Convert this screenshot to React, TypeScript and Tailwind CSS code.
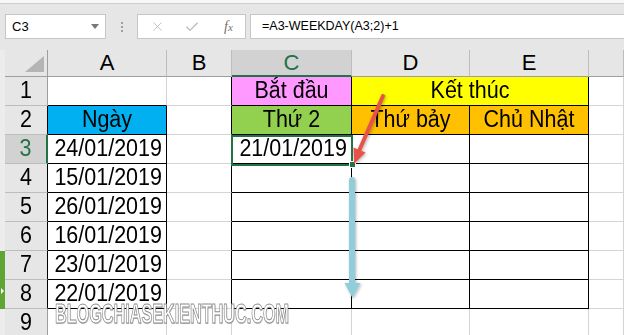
import { X, Check } from 'lucide-react';

interface CellInfo {
  text?: string;
  bg?: string;
  align?: 'left' | 'center' | 'right';
  span?: number;
  rb?: boolean;
  bb?: boolean;
}

const cols = ['A', 'B', 'C', 'D', 'E', ''];

// black-bordered block: A2:A8 and C1:E8 (col index 0 = A)
const inBlock = (r: number, c: number) =>
  (c === 0 && r >= 2 && r <= 8) || (c >= 2 && c <= 4 && r >= 1 && r <= 8);

const dates = ['24/01/2019', '15/01/2019', '26/01/2019', '16/01/2019', '23/01/2019', '22/01/2019'];

function buildRow(r: number): CellInfo[] {
  const cells: CellInfo[] = [];
  for (let c = 0; c < 6; c++) {
    const rb = inBlock(r, c) || inBlock(r, c + 1);
    const bb = inBlock(r, c) || inBlock(r + 1, c);
    const cell: CellInfo = { rb, bb };
    if (c === 0 && r === 2) Object.assign(cell, { text: 'Ngày', bg: 'bg-[#00b0f0]', align: 'center' });
    if (c === 0 && r >= 3 && r <= 8) Object.assign(cell, { text: dates[r - 3], align: 'right' });
    if (c === 2 && r === 1) Object.assign(cell, { text: 'Bắt đầu', bg: 'bg-[#ff99ff]', align: 'center' });
    if (c === 2 && r === 2) Object.assign(cell, { text: 'Thứ 2', bg: 'bg-[#92d050]', align: 'center' });
    if (c === 2 && r === 3) Object.assign(cell, { text: '21/01/2019', align: 'right' });
    if (c === 3 && r === 1) Object.assign(cell, { text: 'Kết thúc', bg: 'bg-[#ffff00]', align: 'center', span: 2, rb: true });
    if (c === 3 && r === 2) Object.assign(cell, { text: 'Thứ bảy', bg: 'bg-[#ffc000]', align: 'center' });
    if (c === 4 && r === 2) Object.assign(cell, { text: 'Chủ Nhật', bg: 'bg-[#ffc000]', align: 'center' });
    if (c === 4 && r === 1) continue;
    cells.push(cell);
  }
  return cells;
}

function Cell({ cell }: { cell: CellInfo }) {
  const justify =
    cell.align === 'right' ? 'justify-end pr-[4px]' : cell.align === 'center' ? 'justify-center' : 'justify-start';
  return (
    <div
      className={`flex items-center text-[21.5px] leading-[0.7] text-black border-r border-b ${justify} ${
        cell.bg ?? 'bg-white'
      } ${cell.rb ? 'border-r-black' : 'border-r-[#d4d4d4]'} ${cell.bb ? 'border-b-black' : 'border-b-[#d4d4d4]'} ${
        cell.span === 2 ? 'col-span-2' : ''
      }`}
    >
      {cell.text && <span className="inline-block scale-y-[1.1]">{cell.text}</span>}
    </div>
  );
}

function RowHeader({ r }: { r: number }) {
  const selected = r === 3;
  const green = r === 7 || r === 8;
  return (
    <div className="flex">
      <div className={`w-[5px] relative ${green ? 'bg-[#5ea531]' : 'bg-[#ececec]'}`}>
        {r === 8 && (
          <div className="absolute left-[1px] top-[8px] w-0 h-0 border-y-[3px] border-y-transparent border-l-[3px] border-l-white" />
        )}
      </div>
      <div
        className={`flex-1 flex items-center justify-center text-[21.5px] leading-[0.7] border-b border-b-[#bdbdbd] border-r ${
          selected ? 'bg-[#d2d2d2] text-[#217346] border-r-[#217346] border-r-2' : 'bg-[#e6e6e6] text-black'
        } ${!selected && r >= 2 && r <= 8 ? 'border-r-black' : ''} ${!selected && (r < 2 || r > 8) ? 'border-r-[#9e9e9e]' : ''}`}
      >
        <span className="inline-block scale-y-[1.1]">{r}</span>
      </div>
    </div>
  );
}

export default function App() {
  const rows = [1, 2, 3, 4, 5, 6, 7, 8, 9];

  return (
    <div className="relative w-[624px] h-[335px] overflow-hidden bg-[#e6e6e6] font-['Liberation_Sans',Arial,sans-serif]">
      {/* top strip */}
      <div className="h-[4px] bg-[#f7f7f7] border-b border-b-[#d0d0d0]" />

      {/* formula bar */}
      <div className="h-[46px] pt-[10px] flex items-start">
        <div className="ml-[5px] w-[101px] h-[25px] bg-white border border-[#c6c6c6] flex items-center justify-between pl-[6px] pr-[6px] text-[13px] text-black">
          <span>C3</span>
          <span className="w-0 h-0 border-x-[4px] border-x-transparent border-t-[5px] border-t-[#777]" />
        </div>
        <div className="w-[31px] h-[25px] flex flex-col items-center justify-center gap-[2px]">
          <span className="w-[2px] h-[2px] bg-[#a0a0a0]" />
          <span className="w-[2px] h-[2px] bg-[#a0a0a0]" />
          <span className="w-[2px] h-[2px] bg-[#a0a0a0]" />
        </div>
        <div className="w-[109px] h-[25px] bg-white border border-[#c6c6c6] flex items-center pl-[12px]">
          <X size={15} strokeWidth={1.3} className="text-[#b5b5b5]" />
          <Check size={16} strokeWidth={1.6} className="text-[#b5b5b5] ml-[19px]" />
          <span className="ml-[24px] text-[14px] italic text-[#707070] font-['Liberation_Serif',serif]">
            f<span className="text-[11px]">x</span>
          </span>
        </div>
        <div className="ml-[4px] flex-1 h-[25px] bg-white border border-[#c6c6c6] border-r-0 flex items-center pl-[11px] text-[12.5px] text-black">
          =A3-WEEKDAY(A3;2)+1
        </div>
      </div>

      {/* sheet */}
      <div className="grid grid-cols-[48px_119px_65px_120px_118px_119px_35px] grid-rows-[27px_repeat(9,29px)]">
        {/* corner */}
        <div className="flex">
          <div className="w-[5px] bg-[#ececec]" />
          <div className="flex-1 relative bg-[#e6e6e6] border-r border-b border-[#9e9e9e]">
            <div className="absolute right-[3px] bottom-[4px] w-0 h-0 border-l-[19px] border-l-transparent border-b-[16px] border-b-[#b4b4b4]" />
          </div>
        </div>
        {cols.map((c, i) => (
          <div
            key={i}
            className={`flex items-center justify-center text-[22px] leading-none border-r ${
              c === 'C'
                ? 'bg-[#d2d2d2] text-[#217346] border-b-2 border-b-[#217346] border-r-[#bdbdbd]'
                : 'bg-[#e6e6e6] text-black border-b border-b-[#9e9e9e] border-r-[#bdbdbd]'
            }`}
          >
            {c}
          </div>
        ))}

        {rows.map((r) => (
          <div key={r} className="contents">
            <RowHeader r={r} />
            {buildRow(r).map((cell, i) => (
              <Cell key={i} cell={cell} />
            ))}
          </div>
        ))}
      </div>

      {/* selected cell C3 */}
      <div className="absolute left-[231px] top-[135px] w-[122px] h-[31px] border-2 border-[#217346] pointer-events-none" />
      <div className="absolute left-[349px] top-[161px] w-[7px] h-[7px] bg-[#217346] border border-white" />

      {/* arrows */}
      <svg className="absolute inset-0 pointer-events-none" width={624} height={335} viewBox="0 0 624 335">
        <defs>
          <filter id="sh" x="-50%" y="-20%" width="200%" height="140%">
            <feDropShadow dx="1" dy="1" stdDeviation="1.5" floodColor="#000" floodOpacity="0.3" />
          </filter>
        </defs>
        <g filter="url(#sh)">
          <line x1="383" y1="96" x2="359" y2="151" stroke="#e8524a" strokeWidth="4" strokeLinecap="round" />
          <polygon points="354,164 353.5,147.5 365.5,152.5" fill="#e8524a" />
        </g>
        <g filter="url(#sh)">
          <line x1="352" y1="180" x2="352" y2="285" stroke="#92cddc" strokeWidth="6" strokeLinecap="round" />
          <polygon points="344.5,283 360.5,283 352.5,298" fill="#92cddc" />
        </g>
      </svg>

      {/* watermark */}
      <div className="absolute left-[55px] top-[304px] pointer-events-none">
        <span className="inline-block origin-left scale-x-[0.6] text-[27px] leading-[0.75] font-bold text-white [-webkit-text-stroke:1px_#8c8c8c] [text-shadow:1px_1px_1px_rgba(0,0,0,0.25)] whitespace-nowrap">
          BLOGCHIASEKIENTHUC.COM
        </span>
      </div>
    </div>
  );
}
